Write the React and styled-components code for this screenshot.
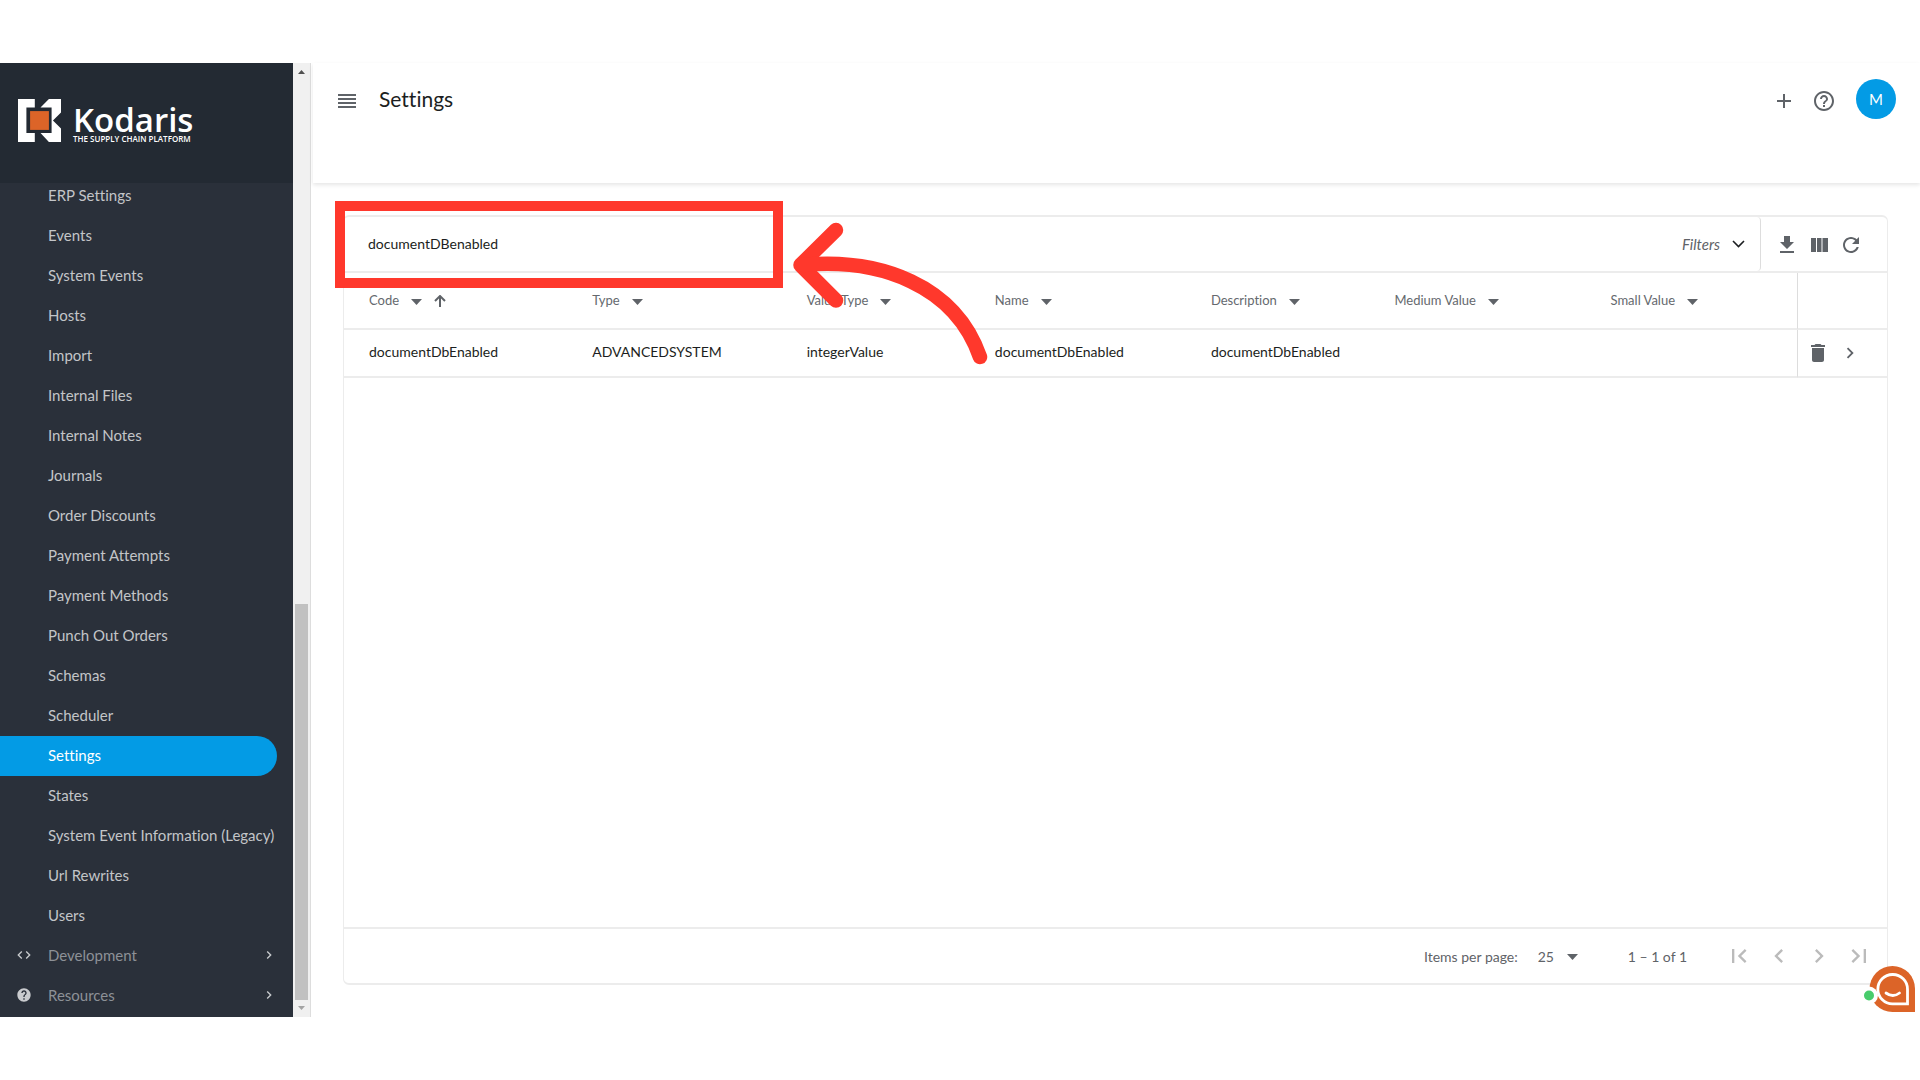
import React, { useState } from "react";
import styled, { createGlobalStyle } from "styled-components";

const GlobalStyle = createGlobalStyle`
  * {
    box-sizing: border-box;
  }

  body {
    margin: 0;
    background: #ffffff;
    color: #1c1e21;
    font-family: Lato, "Open Sans", sans-serif;
    font-size: 14px;
    font-variant-ligatures: none;
  }

  button, input, select {
    margin: 0;
    padding: 0;
    border: 0;
    background: none;
    color: inherit;
    font: inherit;
  }
`;

const Page = styled.div`
  display: flex;
  height: 100vh;
  padding: 63px 0;
`;

/* sidebar */

const Sidebar = styled.aside`
  display: flex;
  flex-direction: column;
  flex: 0 0 293px;
  background: #2a303a;
`;

const Brand = styled.a`
  display: flex;
  align-items: flex-start;
  gap: 12px;
  flex: 0 0 120px;
  padding: 36px 18px 0;
  background: #232a33;
  color: #ffffff;
  text-decoration: none;
  font-family: "Open Sans", "Noto Sans", sans-serif;
  white-space: nowrap;
`;

const BrandText = styled.span`
  display: flex;
  flex-direction: column;
`;

const BrandName = styled.span`
  font-size: 33px;
  font-weight: 600;
  line-height: 42px;
`;

const BrandTagline = styled.span`
  margin-top: -6px;
  font-size: 8px;
  font-weight: 600;
  line-height: 8px;
`;

const Nav = styled.nav`
  display: flex;
  flex-direction: column;
  justify-content: flex-end;
  flex: 1;
  min-height: 0;
  padding-bottom: 1px;
  overflow: hidden;
`;

const NavItem = styled.a`
  display: flex;
  align-items: center;
  flex: 0 0 40px;
  margin-right: 16px;
  padding-bottom: 3px;
  padding-left: ${(p) => (p.$group ? "16px" : "48px")};
  border-radius: 0 20px 20px 0;
  background: ${(p) => (p.$active ? "#039be5" : "transparent")};
  color: ${(p) => (p.$active ? "#ffffff" : p.$group ? "#8d9197" : "#c3c5c8")};
  font-size: 15px;
  text-decoration: none;
  white-space: nowrap;

  svg {
    color: #c9cbce;
  }
`;

const GroupLabel = styled.span`
  flex: 1;
  padding-left: 16px;
`;

const Scrollbar = styled.div`
  display: flex;
  flex-direction: column;
  align-items: center;
  justify-content: space-between;
  flex: 0 0 18px;
  padding: 7px 1px 7px 0;
  border-right: 1px solid #dddddd;
  background: #f0f0f0;
`;

const Track = styled.div`
  display: flex;
  flex-direction: column;
  justify-content: flex-end;
  flex: 1;
  width: 13px;
  margin: 6px 0;
`;

const Thumb = styled.div`
  height: 43%;
  background: #c1c1c1;
`;

/* main area */

const Main = styled.main`
  display: flex;
  flex-direction: column;
  flex: 1;
  min-width: 0;
`;

const Header = styled.header`
  display: flex;
  align-items: flex-start;
  flex: 0 0 120px;
  margin-left: 2px;
  padding: 16px 24px 0 14px;
  box-shadow: 0 2px 4px rgba(0, 0, 0, 0.1);
  color: #5f6368;
`;

const IconButton = styled.button`
  display: flex;
  align-items: center;
  justify-content: center;
  width: ${(p) => p.$w || 40}px;
  height: ${(p) => p.$h || 40}px;
  color: ${(p) => (p.$muted ? "#bbbbbb" : "#5f6368")};
  cursor: pointer;
`;

const Title = styled.h1`
  flex: 1;
  margin: 0;
  padding-left: 12px;
  color: #1c1e21;
  font-size: 21px;
  font-weight: 400;
  line-height: 40px;
`;

const Avatar = styled.button`
  width: 40px;
  height: 40px;
  margin-left: 12px;
  border-radius: 50%;
  background: #039be5;
  color: #ffffff;
  font-size: 15px;
`;

const Card = styled.section`
  position: relative;
  display: flex;
  flex-direction: column;
  flex: 1;
  margin: 32px;
  border: 2px solid #ececec;
  border-width: 2px 1px;
  border-radius: 6px;
`;

const Toolbar = styled.div`
  display: flex;
  flex: 0 0 56px;
  border-bottom: 2px solid #ececec;
`;

const SearchInput = styled.input`
  flex: 1;
  padding: 0 0 2px 24px;
  outline: none;
`;

const FiltersButton = styled.button`
  display: flex;
  align-items: center;
  gap: 12px;
  padding-right: 15px;
  border-right: 1px solid #dddddd;
  border-radius: 0 4px 4px 0;
  color: #5f6368;
  font-size: 15px;
  font-style: italic;

  svg {
    color: #1c1e21;
  }
`;

const Tools = styled.div`
  display: flex;
  align-items: center;
  padding: 2px 20px 0 10px;
`;

const Table = styled.table`
  width: 100%;
  border-spacing: 0;
  table-layout: fixed;
`;

const Th = styled.th`
  width: ${(p) => p.$w};
  height: 57px;
  padding: 0 0 2px 9px;
  border-bottom: 2px solid #ececec;
  font-weight: 400;
  text-align: left;

  &:first-child {
    padding-left: 25px;
  }

  &:last-child {
    border-left: 1px solid #dddddd;
  }
`;

const ColumnButton = styled.button`
  display: flex;
  align-items: center;
  gap: 12px;
  color: #65696e;
  font-size: 13px;
  white-space: nowrap;

  svg {
    margin-top: 2px;
    color: #5f6368;
  }
`;

const Td = styled.td`
  height: 48px;
  padding: 0 0 3px 9px;
  border-bottom: 2px solid #ececec;
  white-space: nowrap;

  &:first-child {
    padding-left: 25px;
  }

  &:last-child {
    padding: 0 0 0 4px;
    border-left: 1px solid #dddddd;
  }
`;

const RowActions = styled.div`
  display: flex;
`;

const Footer = styled.footer`
  display: flex;
  align-items: center;
  justify-content: flex-end;
  flex: 0 0 56px;
  margin-top: auto;
  padding-right: 8px;
  border-top: 2px solid #ececec;
  color: #5f6368;
`;

const PageSize = styled.label`
  display: flex;
  align-items: center;
  gap: 20px;
`;

const SelectWrap = styled.span`
  display: flex;
  align-items: center;

  select {
    width: 29px;
    appearance: none;
    outline: none;
  }
`;

const Range = styled.span`
  padding: 0 32px 0 50px;
`;

/* annotations and chat bubble over the page */

const Highlight = styled.div`
  position: absolute;
  top: -16px;
  left: -9px;
  width: 448px;
  height: 87px;
  border: 10px solid #ff382c;
  pointer-events: none;
`;

const Arrow = styled.svg`
  position: absolute;
  top: 3px;
  left: 446px;
  pointer-events: none;
`;

const Chat = styled.button`
  position: fixed;
  right: 5px;
  bottom: 68px;
  display: flex;
`;

const icons = {
  add: "M19 13h-6v6h-2v-6H5v-2h6V5h2v6h6v2z",
  help: "M11 18h2v-2h-2v2zm1-16C6.48 2 2 6.48 2 12s4.48 10 10 10 10-4.48 10-10S17.52 2 12 2zm0 18c-4.41 0-8-3.59-8-8s3.59-8 8-8 8 3.59 8 8-3.59 8-8 8zm0-14c-2.21 0-4 1.79-4 4h2c0-1.1.9-2 2-2s2 .9 2 2c0 2-3 1.75-3 5h2c0-2.25 3-2.5 3-5 0-2.21-1.79-4-4-4z",
  helpSolid:
    "M12 2C6.48 2 2 6.48 2 12s4.48 10 10 10 10-4.48 10-10S17.52 2 12 2zm1 17h-2v-2h2v2zm2.07-7.75l-.9.92C13.45 12.9 13 13.5 13 15h-2v-.5c0-1.1.45-2.1 1.17-2.83l1.24-1.26c.37-.36.59-.86.59-1.41 0-1.1-.9-2-2-2s-2 .9-2 2H8c0-2.21 1.79-4 4-4s4 1.79 4 4c0 .88-.36 1.68-.93 2.25z",
  code: "M9.4 16.6L4.8 12l4.6-4.6L8 6l-6 6 6 6 1.4-1.4zm5.2 0l4.6-4.6-4.6-4.6L16 6l6 6-6 6-1.4-1.4z",
  download: "M19 9h-4V3H9v6H5l7 7 7-7zM5 18v2h14v-2H5z",
  columns: "M10 19h4.500V5H10v14zM4 19h5V5H4v14zM15.500 5v14H21V5h-5.500z",
  refresh:
    "M17.65 6.35C16.2 4.9 14.21 4 12 4c-4.42 0-7.99 3.58-7.99 8s3.57 8 7.99 8c3.73 0 6.84-2.55 7.73-6h-2.08c-.82 2.33-3.04 4-5.65 4-3.31 0-6-2.69-6-6s2.69-6 6-6c1.66 0 3.14.69 4.22 1.78L13 11h7V4l-2.35 2.35z",
  trash: "M6 19c0 1.1.9 2 2 2h8c1.1 0 2-.9 2-2V7H6v12zM19 4h-3.500l-1-1h-5l-1 1H5v2h14V4z",
  right: "M10 6L8.590 7.410 13.170 12l-4.580 4.590L10 18l6-6z",
  left: "M15.410 7.410L14 6l-6 6 6 6 1.410-1.410L10.830 12z",
  first: "M18.410 16.590L13.820 12l4.590-4.590L17 6l-6 6 6 6zM6 6h2v12H6z",
  last: "M5.590 7.410L10.180 12l-4.590 4.590L7 18l6-6-6-6zM16 6h2v12h-2z",
};

function Icon({ name, size = 24 }) {
  return (
    <svg width={size} height={size} viewBox="0 0 24 24" fill="currentColor" aria-hidden="true">
      <path d={icons[name]} />
    </svg>
  );
}

function Caret() {
  return (
    <svg width="11" height="8" viewBox="0 0 11 8" fill="currentColor" aria-hidden="true">
      <path d="M0 2h11L5.500 8z" />
    </svg>
  );
}

function ScrollArrow({ up }) {
  return (
    <svg width="7" height="4" viewBox="0 0 7 4" aria-hidden="true">
      <path d={up ? "M0 4L3.500 0 7 4z" : "M0 0h7L3.500 4z"} fill={up ? "#505050" : "#a3a3a3"} />
    </svg>
  );
}

function LogoMark() {
  return (
    <svg width="43" height="43" viewBox="0 0 128 128" aria-hidden="true">
      <path d="M0 0h50v25H25v76h25v27H0z" fill="#fff" />
      <path d="M92 0h36v40l-24 24 24 24v40H92L67 101h33V25H67z" fill="#fff" />
      <path d="M36 36h56v56H36z" fill="#dc6428" />
    </svg>
  );
}

const navItems = [
  "ERP Settings",
  "Events",
  "System Events",
  "Hosts",
  "Import",
  "Internal Files",
  "Internal Notes",
  "Journals",
  "Order Discounts",
  "Payment Attempts",
  "Payment Methods",
  "Punch Out Orders",
  "Schemas",
  "Scheduler",
  "Settings",
  "States",
  "System Event Information (Legacy)",
  "Url Rewrites",
  "Users",
];

const navGroups = [
  { label: "Development", icon: "code" },
  { label: "Resources", icon: "helpSolid" },
];

const columns = [
  { label: "Code", width: "15.5%", sorted: true },
  { label: "Type", width: "13.9%" },
  { label: "Value Type", width: "12.2%" },
  { label: "Name", width: "14%" },
  { label: "Description", width: "11.9%" },
  { label: "Medium Value", width: "14%" },
  { label: "Small Value", width: "auto" },
];

const rows = [
  ["documentDbEnabled", "ADVANCEDSYSTEM", "integerValue", "documentDbEnabled", "documentDbEnabled", "", ""],
];

export default function App() {
  const [search, setSearch] = useState("documentDBenabled");

  return (
    <>
      <GlobalStyle />
      <Page>
        <Sidebar>
          <Brand href="#">
            <LogoMark />
            <BrandText>
              <BrandName>Kodaris</BrandName>
              <BrandTagline>THE SUPPLY CHAIN PLATFORM</BrandTagline>
            </BrandText>
          </Brand>
          <Nav>
            {navItems.map((item) => (
              <NavItem key={item} href="#" $active={item === "Settings"}>
                {item}
              </NavItem>
            ))}
            {navGroups.map((group) => (
              <NavItem key={group.label} href="#" $group>
                <Icon name={group.icon} size={16} />
                <GroupLabel>{group.label}</GroupLabel>
                <Icon name="right" size={16} />
              </NavItem>
            ))}
          </Nav>
        </Sidebar>
        <Scrollbar>
          <ScrollArrow up />
          <Track>
            <Thumb />
          </Track>
          <ScrollArrow />
        </Scrollbar>

        <Main>
          <Header>
            <IconButton $h={44} aria-label="Toggle menu">
              <svg width="18" height="14" viewBox="0 0 18 14" fill="currentColor" aria-hidden="true">
                <path d="M0 0h18v2H0zM0 4h18v2H0zM0 8h18v2H0zM0 12h18v2H0z" />
              </svg>
            </IconButton>
            <Title>Settings</Title>
            <IconButton $h={44} aria-label="Add">
              <Icon name="add" />
            </IconButton>
            <IconButton $h={44} aria-label="Help">
              <Icon name="help" />
            </IconButton>
            <Avatar>M</Avatar>
          </Header>

          <Card>
            <Toolbar>
              <SearchInput aria-label="Search" value={search} onChange={(e) => setSearch(e.target.value)} />
              <FiltersButton>
                Filters
                <svg width="13" height="8" viewBox="0 0 13 8" fill="none" stroke="currentColor" strokeWidth="1.600" aria-hidden="true">
                  <path d="M1 1l5.500 5.500L12 1" />
                </svg>
              </FiltersButton>
              <Tools>
                <IconButton $w={32} aria-label="Download">
                  <Icon name="download" />
                </IconButton>
                <IconButton $w={32} aria-label="Columns">
                  <Icon name="columns" />
                </IconButton>
                <IconButton $w={32} aria-label="Refresh">
                  <Icon name="refresh" />
                </IconButton>
              </Tools>
            </Toolbar>

            <Table>
              <thead>
                <tr>
                  {columns.map((col) => (
                    <Th key={col.label} $w={col.width}>
                      <ColumnButton>
                        {col.label}
                        <Caret />
                        {col.sorted && (
                          <svg width="12" height="12" viewBox="0 0 12 12" fill="none" stroke="currentColor" strokeWidth="2" aria-hidden="true">
                            <path d="M6 12V1M1 6l5-5 5 5" />
                          </svg>
                        )}
                      </ColumnButton>
                    </Th>
                  ))}
                  <Th $w="90px" aria-label="Actions" />
                </tr>
              </thead>
              <tbody>
                {rows.map((row, i) => (
                  <tr key={i}>
                    {row.map((cell, j) => (
                      <Td key={j}>{cell}</Td>
                    ))}
                    <Td>
                      <RowActions>
                        <IconButton $w={32} aria-label="Delete">
                          <Icon name="trash" />
                        </IconButton>
                        <IconButton $w={32} aria-label="Open">
                          <Icon name="right" size={22} />
                        </IconButton>
                      </RowActions>
                    </Td>
                  </tr>
                ))}
              </tbody>
            </Table>

            <Footer>
              <PageSize>
                Items per page:
                <SelectWrap>
                  <select defaultValue="25">
                    <option>25</option>
                    <option>50</option>
                    <option>100</option>
                  </select>
                  <Caret />
                </SelectWrap>
              </PageSize>
              <Range>1 – 1 of 1</Range>
              <IconButton $muted aria-label="First page">
                <Icon name="first" size={28} />
              </IconButton>
              <IconButton $muted aria-label="Previous page">
                <Icon name="left" size={28} />
              </IconButton>
              <IconButton $muted aria-label="Next page">
                <Icon name="right" size={28} />
              </IconButton>
              <IconButton $muted aria-label="Last page">
                <Icon name="last" size={28} />
              </IconButton>
            </Footer>

            <Highlight />
            <Arrow width="200" height="150" viewBox="0 0 200 150" fill="none" stroke="#ff382c" strokeWidth="14.500" strokeLinecap="round" strokeLinejoin="round">
              <path d="M46 10L10.500 45 46 80.500" />
              <path d="M13 45C90 38 165 65 190 137" />
            </Arrow>
          </Card>
        </Main>

        <Chat aria-label="Open chat">
          <svg width="51" height="46" viewBox="0 0 51 46" aria-hidden="true">
            <path d="M28.500 0A22.500 22.500 0 0 1 51 22.500V46H28.500a23 23 0 0 1 0-46z" fill="#dc6428" />
            <path d="M28.500 8.500a14.700 14.700 0 0 1 15 15V37.800h-15a14.650 14.650 0 0 1 0-29.300z" fill="none" stroke="#fff" strokeWidth="2.800" />
            <path d="M22 27q7 5 13.500 0" fill="none" stroke="#fff" strokeWidth="2.800" strokeLinecap="round" />
            <circle cx="5" cy="29.500" r="9" fill="#fff" />
            <circle cx="5" cy="29.500" r="5" fill="#48cc6c" />
          </svg>
        </Chat>
      </Page>
    </>
  );
}
